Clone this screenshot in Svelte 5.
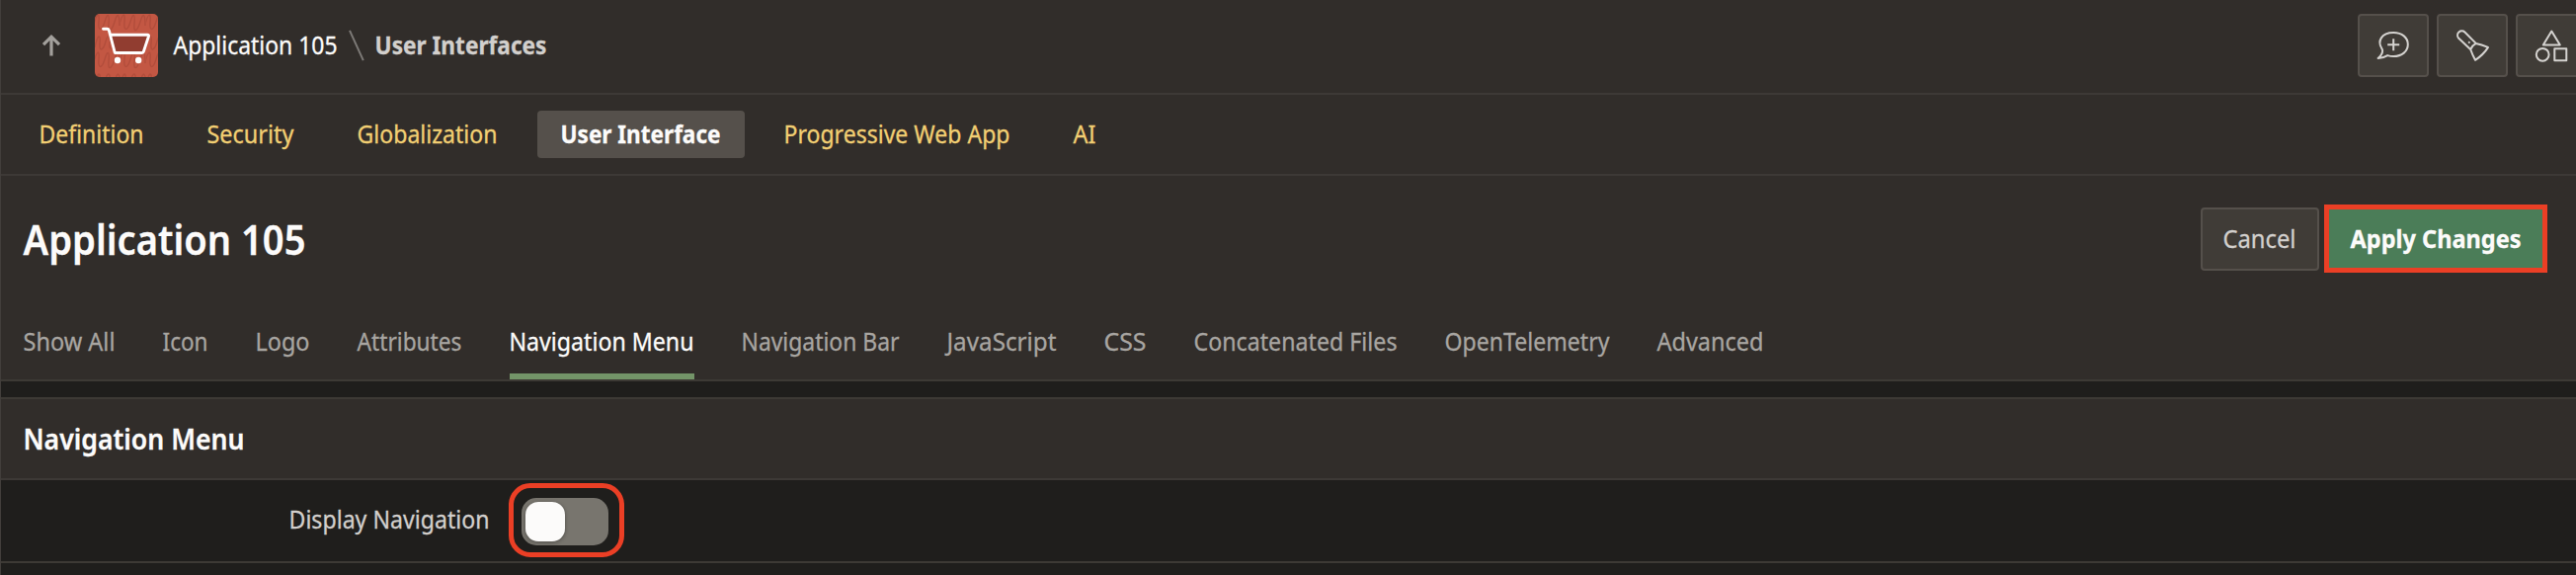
<script>
  const sections = [
    { label: 'Definition', w: 106 },
    { label: 'Security', w: 88 },
    { label: 'Globalization', w: 142 },
    { label: 'User Interface', w: 162, active: true },
    { label: 'Progressive Web App', w: 229 },
    { label: 'AI', w: 23 }
  ];
  const tabs = [
    { label: 'Show All', w: 93 },
    { label: 'Icon', w: 46 },
    { label: 'Logo', w: 55 },
    { label: 'Attributes', w: 106 },
    { label: 'Navigation Menu', w: 187, active: true },
    { label: 'Navigation Bar', w: 160 },
    { label: 'JavaScript', w: 111 },
    { label: 'CSS', w: 43 },
    { label: 'Concatenated Files', w: 206 },
    { label: 'OpenTelemetry', w: 167 },
    { label: 'Advanced', w: 108 }
  ];

  // Condenses a label horizontally so that it fills its column width.
  function fit(node, width) {
    const natural = node.getBoundingClientRect().width;
    node.style.transform = `scaleX(${width / natural})`;
  }
</script>

{#snippet label(text, w)}
  <span class="label" style:width="{w}px"><span class="glyphs" use:fit={w}>{text}</span></span>
{/snippet}

<div class="page">
  <header class="topbar">
    <svg class="up" width="20" height="24" viewBox="0 0 20 24" fill="none" stroke="#a3a09c" stroke-width="3.2">
      <path d="M10 22.5V3.5M2 11.2L10 3.2l8 8" />
    </svg>
    <svg class="app-icon" width="64" height="64" viewBox="0 0 64 64">
      <defs>
        <pattern id="waves" width="26" height="38" patternUnits="userSpaceOnUse">
          <path d="M-2 14C2-2 5-2 4 8s3 10 6 0 5-8 4 2 3 8 6-2 5-8 5 4M0 34c3-14 6-14 5-4s4 6 6-2 5-6 4 2 4 6 6-2 4-6 5 4" fill="none" stroke="#b34d3b" stroke-width="1.5" />
        </pattern>
      </defs>
      <rect width="64" height="64" rx="5" fill="#c35743" />
      <rect width="64" height="64" rx="5" fill="url(#waves)" />
      <path d="M16 21h38l-5 18H20z" fill="#913d30" />
      <path d="M8.500 15.200h4q1.300 0 1.800 1.500L20.300 39.500h27.500q1.200 0 1.600-1.400l5.100-15.400q.4-1.500-1.200-1.500H16" fill="none" stroke="#fff" stroke-width="2.900" stroke-linecap="round" stroke-linejoin="round" />
      <circle cx="23" cy="47" r="3.200" fill="#fff" />
      <circle cx="44.200" cy="47" r="3.200" fill="#fff" />
    </svg>
    <nav class="crumbs">
      {@render label('Application 105', 166)}
      <svg class="slash" width="16" height="32" viewBox="0 0 16 32"><path d="M1 .8L14.800 31.200" stroke="#7c7976" stroke-width="2" /></svg>
      <b>{@render label('User Interfaces', 174)}</b>
    </nav>
    <div class="tools">
      <button class="tool" aria-label="Feedback">
        <svg width="36" height="36" viewBox="0 0 36 36" fill="none" stroke="#d5d3d0" stroke-width="2" stroke-linejoin="round">
          <path d="M6.200 20.800C2 14 5.500 5 18.200 5c8.600 0 14.600 5 14.600 12s-6 12-14.600 12c-2.200 0-4-.3-6-.9-2.700 1.700-5.500 2.900-9.600 2.900 3.200-2.700 4.500-4.500 4.500-7.400 0-1-.3-2-.9-2.800z" />
          <path d="M18.200 11.200v12M12.200 17.200h12" />
        </svg>
      </button>
      <button class="tool" aria-label="Spotlight">
        <svg width="36" height="36" viewBox="0 0 36 36" fill="none" stroke="#d5d3d0" stroke-width="2" stroke-linejoin="round">
          <path d="M16.200 22L4 10.500a4.400 4.400 0 0 1 6.400-6L21.700 15.900q5.500 1.200 12.300 4-4.700 7.600-13 12.900-2.800-5.200-4.800-10.800zM16.200 22q1.800-4 5.500-6.100" />
          <circle cx="14.800" cy="14.900" r=".7" fill="#d5d3d0" stroke-width="1" />
        </svg>
      </button>
      <button class="tool" aria-label="Shared components">
        <svg width="36" height="36" viewBox="0 0 36 36" fill="none" stroke="#d5d3d0" stroke-width="2" stroke-linejoin="round">
          <path d="M18.300 3.500l8.500 14H9.800zM21.300 21.300h12v12h-12z" />
          <circle cx="9.200" cy="27.300" r="6.400" />
        </svg>
      </button>
    </div>
  </header>

  <nav class="sections">
    {#each sections as s}
      <a class="section" class:active={s.active}>{@render label(s.label, s.w)}</a>
    {/each}
  </nav>

  <div class="heading">
    <h1>{@render label('Application 105', 286)}</h1>
    <div class="actions">
      <button class="cancel">{@render label('Cancel', 74)}</button>
      <div class="marked">
        <button class="apply">{@render label('Apply Changes', 173)}</button>
      </div>
    </div>
  </div>

  <nav class="tabs">
    {#each tabs as t}
      <a class="tab" class:active={t.active}>{@render label(t.label, t.w)}</a>
    {/each}
  </nav>

  <section class="region">
    <h2>{@render label('Navigation Menu', 224)}</h2>
    <div class="field">
      {@render label('Display Navigation', 203)}
      <div class="ring">
        <div class="switch" role="switch" aria-checked="false" tabindex="0"><span class="knob"></span></div>
      </div>
    </div>
  </section>
</div>

<style>
  :global(body) { margin: 0; background: #1f1e1c; }
  .page {
    box-sizing: border-box;
    width: 2608px;
    height: 582px;
    overflow: hidden;
    border-left: 1px solid #423e3b;
    background: #1f1e1c;
    color: #fcfbfa;
    font: 25px/36px "Noto Sans", "Open Sans", sans-serif;
    -webkit-text-stroke: 0.3px currentColor;
  }
  .page :is(button, h1, h2) { font-family: inherit; margin: 0; }
  .page :is(header, nav, div, button, h1, h2) { box-sizing: border-box; }
  .label { display: block; flex: none; white-space: nowrap; translate: -0.5px -1px; }
  .glyphs { display: inline-block; transform-origin: 0 50%; }
  .topbar {
    display: flex;
    align-items: center;
    height: 96px;
    padding: 0 0 2px 41px;
    border-bottom: 2px solid #3d3936;
    background: #312d2a;
  }
  .up { flex: none; }
  .app-icon { flex: none; margin-left: 34px; }
  .crumbs { display: flex; align-items: center; margin-left: 16px; padding: 0; }
  .slash { margin: 0 10px 0 11px; }
  .crumbs b { color: #d2cfcc; font-weight: 700; padding-left: 1px; }
  .tools { display: flex; gap: 8px; margin-left: auto; margin-right: -11px; }
  .tool {
    display: flex;
    align-items: center;
    justify-content: center;
    width: 72px;
    height: 64px;
    padding: 0;
    border: 2px solid #55504b;
    border-radius: 4px;
    background: #403c37;
  }
  .sections {
    display: flex;
    align-items: center;
    gap: 16px;
    height: 82px;
    padding: 0 15px;
    border-bottom: 2px solid #3d3936;
    background: #312d2a;
    color: #f2cf73;
  }
  .section { padding: 6px 24px; border-radius: 4px; }
  .section.active { background: #55504b; color: #fcfbfa; font-weight: 700; }
  .heading {
    display: flex;
    align-items: center;
    justify-content: space-between;
    height: 128px;
    padding: 0 29px 0 23px;
    background: #312d2a;
  }
  h1 { font-size: 41px; line-height: 56px; font-weight: 600; }
  h1 .label, h2 .label { translate: -0.5px 0; }
  .actions { display: flex; align-items: center; gap: 5px; }
  button { display: flex; align-items: center; justify-content: center; }
  .cancel {
    width: 120px;
    height: 64px;
    padding: 0;
    border: 2px solid #55504b;
    border-radius: 4px;
    background: #403c37;
    color: #d2cfcc;
    font-size: 25px;
    text-align: left;
  }
  .marked { margin-top: -1px; border: 5px solid #eb3f25; }
  .apply {
    width: 216px;
    height: 59px;
    padding: 0;
    border: 0;
    background: #4b7d58;
    color: #fcfbfa;
    font-size: 25px;
    font-weight: 700;
    text-align: left;
  }
  .tabs {
    display: flex;
    gap: 48px;
    height: 80px;
    padding-left: 23px;
    border-bottom: 2px solid #3d3a35;
    background: #312d2a;
    color: #a8a5a1;
  }
  .tab { box-sizing: border-box; height: 78px; padding-top: 22px; }
  .tab.active { border-bottom: 6px solid #739468; color: #fcfbfa; }
  .region { margin-top: 16px; border-top: 2px solid #3d3a35; }
  h2 {
    display: flex;
    align-items: center;
    height: 82px;
    padding-left: 23px;
    border-bottom: 2px solid #3d3936;
    background: #312d2a;
    font-size: 28.500px;
    font-weight: 600;
  }
  .field {
    display: flex;
    align-items: center;
    gap: 19px;
    height: 84px;
    padding-left: 292px;
    border-bottom: 2px solid #3d3a35;
    color: #d2cfcc;
  }
  .field > .label, .field .label { translate: -0.5px -2px; }
  .ring {
    width: 117px;
    height: 75px;
    margin-top: -1px;
    padding: 10px 8px;
    border: 5px solid #eb3f25;
    border-radius: 22px;
  }
  .switch { width: 88px; height: 48px; padding: 4px; border-radius: 15px; background: #78756e; }
  .knob { display: block; width: 40px; height: 40px; border-radius: 13px; background: #fcfbfa; box-shadow: 0 1px 4px #0005; }
</style>
